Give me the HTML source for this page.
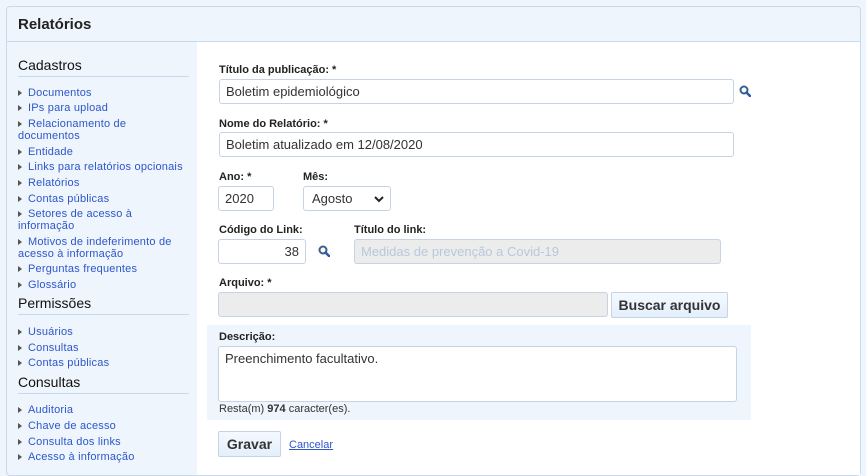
<!DOCTYPE html>
<html><head><meta charset="utf-8"><style>
*{box-sizing:border-box;margin:0;padding:0}
body{width:866px;height:467px;overflow:hidden;background:#eef5fd;font-family:"Liberation Sans",Arial,sans-serif;position:relative}
.box{position:absolute;left:6px;top:6px;width:855px;height:470px;border:1px solid #c9d8ea;border-radius:4px;background:#eef5fd}
.hd{position:absolute;left:0;top:0;right:0;height:35px;border-bottom:1px solid #c9d8ea;font-weight:bold;font-size:15px;color:#222;padding:9px 11px}
.content{position:absolute;left:190px;top:35px;right:0;bottom:0;background:#fff}
.side{position:absolute;left:11px;top:0;width:172px;font-size:11px}
.side h3{position:absolute;font-weight:normal;font-size:14px;color:#111;width:171px;border-bottom:1px solid #c9d8ea;height:20px}
.side a{position:absolute;left:0;color:#2e56c9;text-decoration:none;line-height:12px;white-space:nowrap;letter-spacing:0.2px}
.side a:before{content:"";display:inline-block;margin-right:6px;vertical-align:0;border-left:4px solid #555;border-top:3.5px solid transparent;border-bottom:3.5px solid transparent}
.lbl{position:absolute;font-size:11px;font-weight:bold;color:#222}
.in{position:absolute;height:25px;border:1px solid #c5d3e4;border-radius:3px;background:#fff;font-size:13px;color:#333;padding:4px 6px;line-height:15px}
.dis{background:#ececec;color:#b8c8dc}
.btn{position:absolute;border:1px solid #c5d3e4;border-radius:2px;background:linear-gradient(#f4f9ff,#e3effc);font-weight:bold;font-size:14px;color:#333;text-align:center}
.mag{position:absolute;width:12px;height:12px}
</style></head><body>
<div class="box">
<div class="hd">Relatórios</div>
<div class="side">
<h3 style="top:50px">Cadastros</h3>
<a style="top:80px">Documentos</a>
<a style="top:95px">IPs para upload</a>
<a style="top:111px">Relacionamento de<br>documentos</a>
<a style="top:139px">Entidade</a>
<a style="top:154px">Links para relatórios opcionais</a>
<a style="top:170px">Relatórios</a>
<a style="top:186px">Contas públicas</a>
<a style="top:201px">Setores de acesso à<br>informação</a>
<a style="top:229px">Motivos de indeferimento de<br>acesso à informação</a>
<a style="top:256px">Perguntas frequentes</a>
<a style="top:272px">Glossário</a>
<h3 style="top:288px">Permissões</h3>
<a style="top:319px">Usuários</a>
<a style="top:335px">Consultas</a>
<a style="top:350px">Contas públicas</a>
<h3 style="top:367px">Consultas</h3>
<a style="top:397px">Auditoria</a>
<a style="top:413px">Chave de acesso</a>
<a style="top:429px">Consulta dos links</a>
<a style="top:444px">Acesso à informação</a>
</div>
<div class="content"></div>
</div>
<svg width="0" height="0" style="position:absolute"><defs><g id="m"><circle cx="5" cy="5" r="3.5" fill="#fff" stroke="#3a5f8f" stroke-width="2"/><path d="M7.5 7.5L11 11" stroke="#2a5aa8" stroke-width="2.5" stroke-linecap="round"/></g></defs></svg>
<div class="lbl" style="left:219px;top:64px">Título da publicação: *</div>
<div class="in" style="left:219px;top:79px;width:515px">Boletim epidemiológico</div>
<svg class="mag" style="left:739px;top:85px"><use href="#m"/></svg>
<div class="lbl" style="left:219px;top:118px">Nome do Relatório: *</div>
<div class="in" style="left:219px;top:132px;width:515px">Boletim atualizado em 12/08/2020</div>
<div class="lbl" style="left:219px;top:171px">Ano: *</div>
<div class="in" style="left:218px;top:186px;width:56px">2020</div>
<div class="lbl" style="left:303px;top:171px">Mês:</div>
<div class="in" style="left:303px;top:186px;width:88px;padding-left:8px">Agosto<svg style="position:absolute;right:6px;top:9px" width="10" height="7"><path d="M1 1l4 4 4-4" fill="none" stroke="#222" stroke-width="2"/></svg></div>
<div class="lbl" style="left:219px;top:224px">Código do Link:</div>
<div class="in" style="left:218px;top:239px;width:88px;text-align:right">38</div>
<svg class="mag" style="left:318px;top:245px"><use href="#m"/></svg>
<div class="lbl" style="left:354px;top:224px">Título do link:</div>
<div class="in dis" style="left:354px;top:239px;width:367px">Medidas de prevenção a Covid-19</div>
<div class="lbl" style="left:219px;top:277px">Arquivo: *</div>
<div class="in dis" style="left:218px;top:292px;width:390px"></div>
<div class="btn" style="left:611px;top:292px;width:117px;height:26px;line-height:24px">Buscar arquivo</div>
<div style="position:absolute;left:207px;top:325px;width:544px;height:95px;background:#eef5fd;border-radius:2px"></div>
<div class="lbl" style="left:219px;top:331px">Descrição:</div>
<div class="in" style="left:218px;top:346px;width:519px;height:56px">Preenchimento facultativo.</div>
<div style="position:absolute;left:219px;top:403px;font-size:11px;color:#333">Resta(m) <b>974</b> caracter(es).</div>
<div class="btn" style="left:218px;top:431px;width:63px;height:26px;line-height:24px">Gravar</div>
<div style="position:absolute;left:289px;top:439px;font-size:11px;color:#2e56c9;text-decoration:underline">Cancelar</div>
</body></html>
